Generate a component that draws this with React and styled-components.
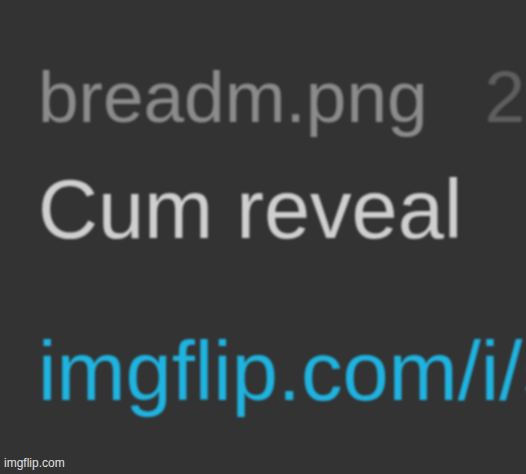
import React from "react"
import styled, { createGlobalStyle } from "styled-components"

const GlobalStyle = createGlobalStyle`
    html, body {
        margin: 0;
        padding: 0;
        background: #333333;
    }
`

const Frame = styled.div`
    position: relative;
    width: 526px;
    height: 474px;
    overflow: hidden;
    background: #333333;
    font-family: "Liberation Sans", Arial, sans-serif;
`

const Comment = styled.div`
    padding: 60px 0 0 38px;
    display: flex;
    flex-direction: column;
    filter: blur(1.1px);
`

const Meta = styled.div`
    display: flex;
    white-space: nowrap;
    font-size: 73px;
    line-height: 73px;
`

const Author = styled.span`
    color: #8b8b8b;
`

const Time = styled.span`
    color: #5e5e5e;
    margin-left: 57px;
`

const Body = styled.div`
    margin-top: 35px;
    font-size: 83px;
    line-height: 83px;
    color: #cfcfcf;
    white-space: nowrap;
`

const Link = styled.a`
    display: block;
    margin-top: 79px;
    font-size: 83px;
    line-height: 83px;
    color: #1fb3e0;
    text-decoration: none;
    white-space: nowrap;
`

const Watermark = styled.div`
    position: absolute;
    left: 4px;
    bottom: 4px;
    font-family: "Liberation Sans", Arial, sans-serif;
    font-size: 12px;
    color: #e2e2e2;
`

export default function App() {
    return (
        <>
            <GlobalStyle />
            <Frame>
                <Comment>
                    <Meta>
                        <Author>breadm.png</Author>
                        <Time>2d ago</Time>
                    </Meta>
                    <Body>Cum reveal</Body>
                    <Link href="#">imgflip.com/i/5xk2q9</Link>
                </Comment>
                <Watermark>imgflip.com</Watermark>
            </Frame>
        </>
    )
}
